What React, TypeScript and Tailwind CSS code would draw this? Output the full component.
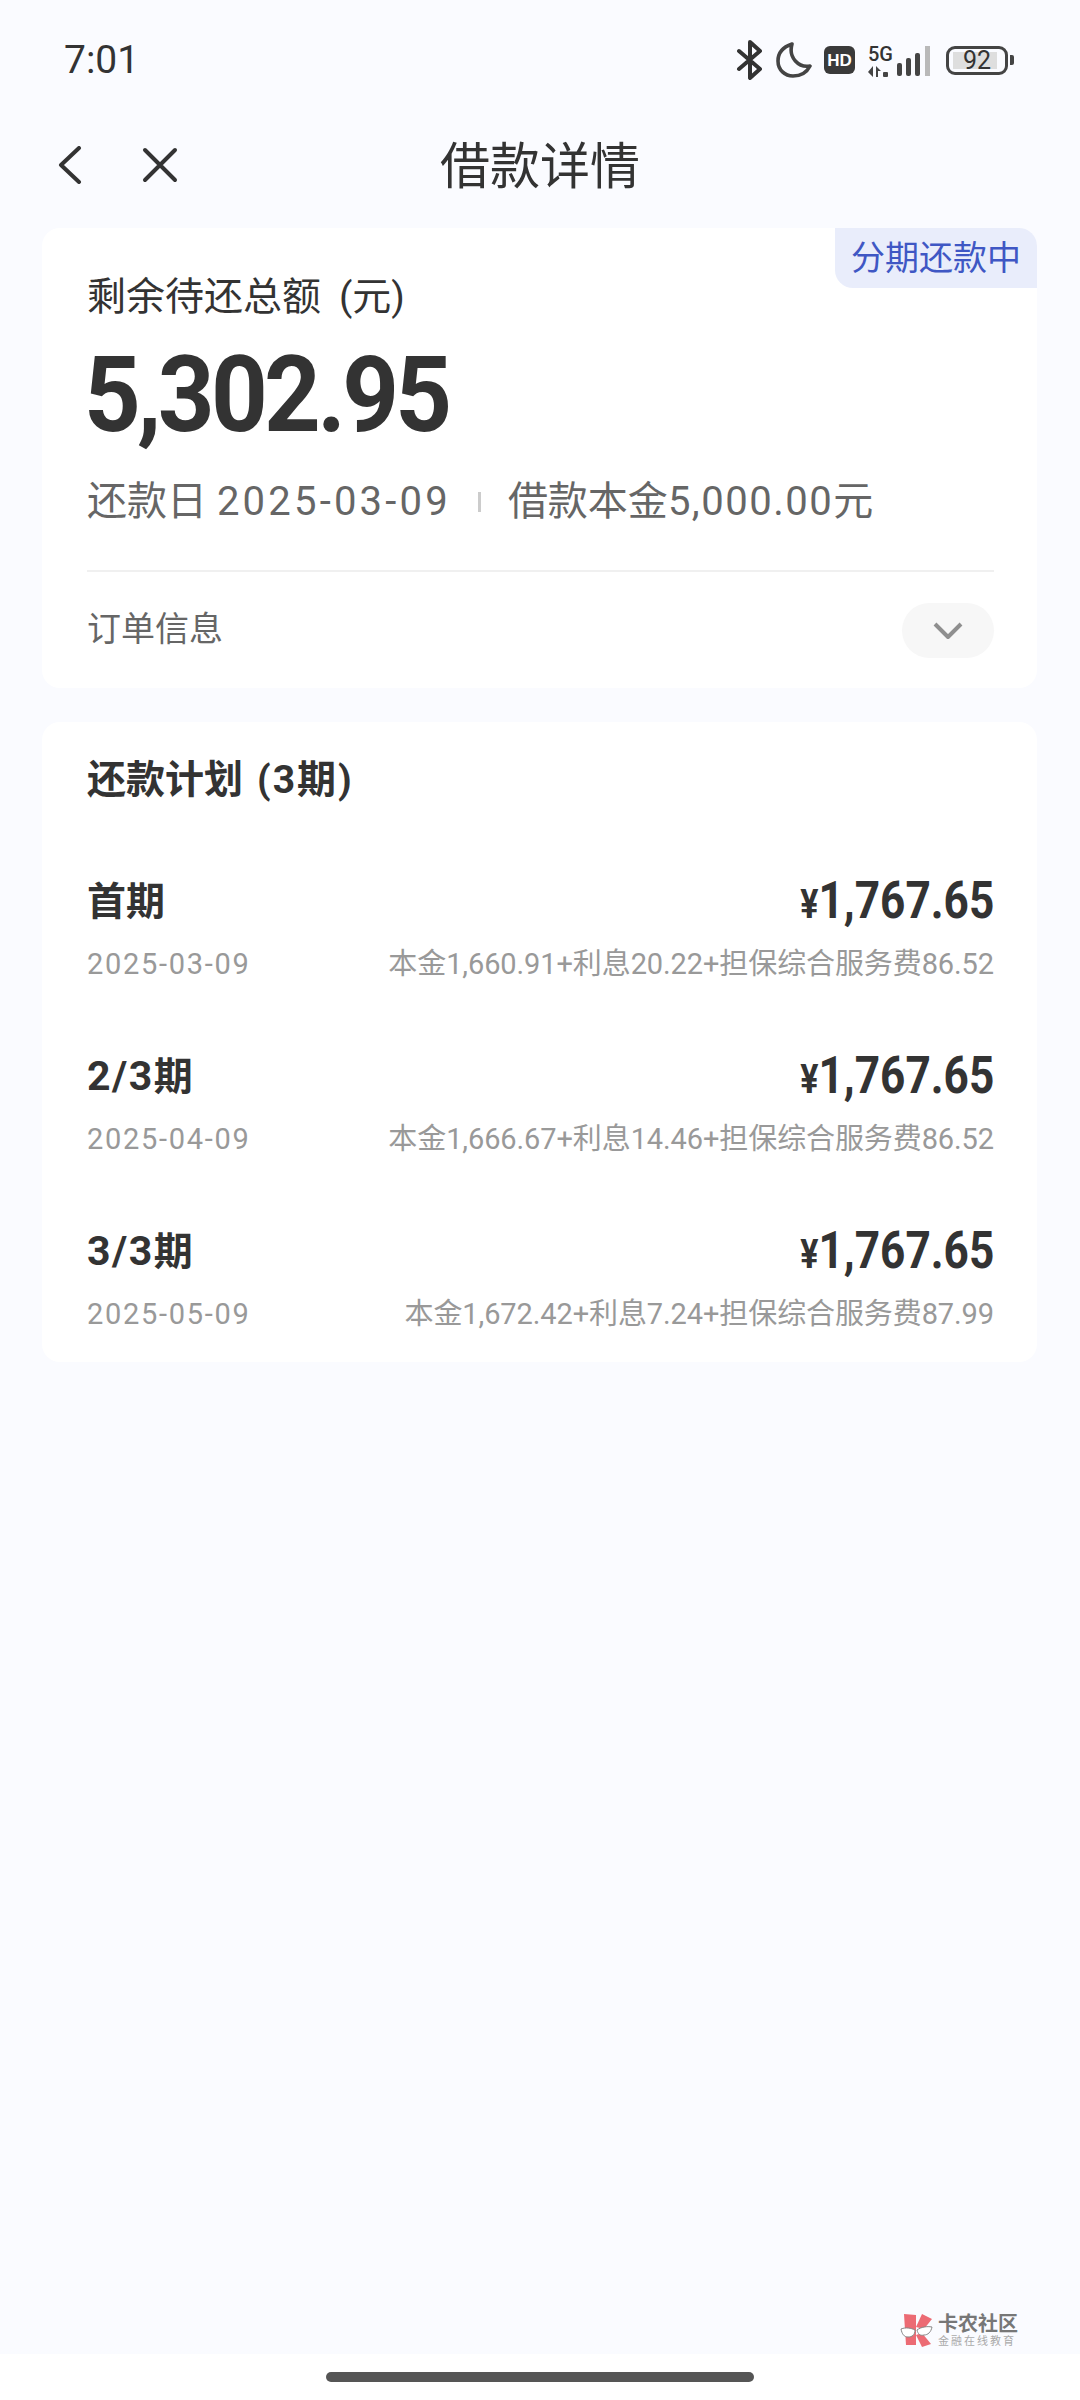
const PLANS = [
  { num: '', name: '首期', date: '2025-03-09', detail: '本金1,660.91+利息20.22+担保综合服务费86.52' },
  { num: '2/3', name: '期', date: '2025-04-09', detail: '本金1,666.67+利息14.46+担保综合服务费86.52' },
  { num: '3/3', name: '期', date: '2025-05-09', detail: '本金1,672.42+利息7.24+担保综合服务费87.99' },
]

function StatusIcons() {
  return (
    <div className="flex items-center text-[#333]">
      {/* bluetooth */}
      <svg className="w-[28px] h-[40px]" viewBox="0 0 28 40" fill="none" stroke="currentColor" strokeWidth="4" strokeLinejoin="round" strokeLinecap="round">
        <path d="M3 11l21 18-10 9V2l10 9L3 29" />
      </svg>
      {/* moon */}
      <svg className="w-[36px] h-[36px] ml-[12px]" viewBox="0 0 36 36" fill="none" stroke="#444" strokeWidth="3.6" strokeLinejoin="round">
        <path d="M16 2C7 5 2 11 2 19c0 9 7 15 15 15 8 0 14-4 17-10-11 2-22-8-18-22z" />
      </svg>
      {/* HD */}
      <div className="w-[31px] h-[28px] ml-[12px] rounded-[6px] bg-[#3a3a3a] flex items-center justify-center text-white text-[17px] leading-none font-bold font-['Liberation_Sans',sans-serif]">
        HD
      </div>
      {/* 5G + signal */}
      <div className="ml-[13px] flex items-end h-[36px]">
        <div className="flex flex-col w-[30px]">
          <span className="text-[20px] leading-[18px] font-medium text-[#333]">5G</span>
          <svg className="w-[20px] h-[12px] mt-[3px]" viewBox="0 0 20 12" fill="#444">
            <path d="M5 0v11L0 6zM8 0l5 5H10v6H8z" />
            <rect x="15" y="6" width="5" height="5" rx="1" />
          </svg>
        </div>
        <svg className="w-[36px] h-[30px] -ml-[1px] mb-[2px]" viewBox="0 0 36 30">
          <rect x="0" y="17" width="5" height="13" rx="2" fill="#444" />
          <rect x="9" y="12" width="5" height="18" rx="2" fill="#444" />
          <rect x="18" y="7" width="5" height="23" rx="2" fill="#444" />
          <rect x="28" y="0" width="5" height="30" fill="#b9b9b9" />
        </svg>
      </div>
      {/* battery */}
      <div className="flex items-center ml-[13px]">
        <div className="relative w-[62px] h-[29px] border-[3px] border-[#444] rounded-[9px] px-[4px] py-[3px]">
          <div className="w-[44px] h-full bg-[#dedede]" />
          <span className="absolute inset-0 flex items-center justify-center text-[25px] leading-none text-[#333]">92</span>
        </div>
        <div className="w-[4px] h-[10px] ml-[2px] rounded-r-[2px] bg-[#444]" />
      </div>
    </div>
  )
}

function Watermark() {
  return (
    <div className="flex items-center justify-end pr-[62px] pb-[2px] h-[46px]">
      <svg className="w-[36px] h-[36px]" viewBox="0 0 36 36">
        <g fill="#ec6b74">
          <path d="M5 2l12 1v30H7z" />
          <path d="M23 2l10 5-8 10-8-2z" />
          <path d="M17 23l6-2 9 11-9 3z" />
        </g>
        <path d="M2 17c5-2 10-1 14 1 0 5-3 7-7 7-4 0-6-3-7-8zM33 15c-5-1-11 0-15 3 1 4 3 6 7 5 4 0 7-3 8-8z" fill="#fff" stroke="#888" strokeWidth="1" />
      </svg>
      <div className="ml-[3px] flex flex-col items-start font-['Noto_Sans_CJK_SC',sans-serif]">
        <span className="text-[20px] leading-[20px] font-bold text-[#777]">卡农社区</span>
        <span className="text-[11px] leading-[14px] tracking-[2px] text-[#aaa]">金融在线教育</span>
      </div>
    </div>
  )
}

export default function App() {
  return (
    <div className="w-[1080px] h-[2400px] flex flex-col bg-[#fafbff] text-[#333] font-['Roboto','Noto_Sans_CJK_SC',sans-serif]">
      {/* status bar */}
      <div className="h-[120px] flex items-center justify-between pl-[64px] pr-[66px]">
        <span className="text-[39px] leading-none">7:01</span>
        <StatusIcons />
      </div>

      {/* nav */}
      <div className="h-[90px] grid grid-cols-[1fr_auto_1fr] items-center">
        <div className="flex items-center gap-[60px] pl-[58px]">
          <svg className="w-[24px] h-[38px]" viewBox="0 0 24 38" fill="none" stroke="#333" strokeWidth="4" strokeLinecap="round" strokeLinejoin="round">
            <path d="M21 2L3 19l18 17" />
          </svg>
          <svg className="w-[36px] h-[36px]" viewBox="0 0 36 36" fill="none" stroke="#333" strokeWidth="4" strokeLinecap="round">
            <path d="M3 3l30 30M33 3L3 33" />
          </svg>
        </div>
        <h1 className="text-[50px] leading-none font-normal pt-[4px]">借款详情</h1>
        <div />
      </div>

      {/* summary card */}
      <div className="relative mt-[18px] ml-[42px] w-[995px] h-[460px] rounded-[18px] bg-white pl-[45px] pr-[43px] pt-[46px]">
        <div className="absolute right-0 top-0 w-[202px] h-[60px] rounded-tr-[18px] rounded-bl-[18px] bg-[#e9edfb] flex items-center justify-center text-[34px] leading-none text-[#3f57c4]">
          分期还款中
        </div>
        <p className="text-[39px] leading-[46px]">
          剩余待还总额<span className="ml-[18px]">(元)</span>
        </p>
        <p className="mt-[15px] -ml-[3px] text-[106px] leading-[120px] font-bold tracking-[-4px] origin-left scale-x-[.935] text-[#333]">5,302.95</p>
        <div className="mt-[22px] flex items-center h-[50px] text-[40px] leading-none text-[#666]">
          <span>
            还款日 <span className="tracking-[3.2px]">2025-03-09</span>
          </span>
          <span className="mx-[27px] w-[3px] h-[20px] bg-[#ccc]" />
          <span>
            借款本金<span className="tracking-[1.5px]">5,000.00</span>元
          </span>
        </div>
        <div className="mt-[43px] h-[2px] bg-[#f0f0f0]" />
        <div className="mt-[31px] flex items-center justify-between">
          <span className="pb-[3px] text-[34px] leading-none text-[#666]">订单信息</span>
          <div className="w-[92px] h-[55px] rounded-full bg-[#f7f7f7] flex items-center justify-center">
            <svg className="w-[30px] h-[18px]" viewBox="0 0 30 18" fill="none" stroke="#8f8f8f" strokeWidth="4" strokeLinejoin="round">
              <path d="M2 2l13 13L28 2" />
            </svg>
          </div>
        </div>
      </div>

      {/* repayment plan */}
      <div className="mt-[34px] ml-[42px] w-[995px] h-[640px] rounded-[18px] bg-white pl-[45px] pr-[43px] pt-[35px]">
        <h2 className="text-[39px] leading-[46px] font-bold">
          还款计划<span className="ml-[14px] tracking-[2px]">(3期)</span>
        </h2>
        <div className="mt-[70px] flex flex-col gap-[59px]">
          {PLANS.map((plan) => (
            <div key={plan.date}>
              <div className="flex items-center justify-between h-[56px]">
                <span className="text-[39px] leading-none font-bold">
                  <span className="text-[41px] tracking-[1.5px]">{plan.num}</span>
                  {plan.name}
                </span>
                <span className="flex items-baseline origin-right scale-x-[.85] text-[52px] leading-none font-bold">
                  <span className="text-[40px]">¥</span>1,767.65
                </span>
              </div>
              <div className="mt-[10px] flex items-center justify-between h-[50px] text-[29px] leading-none text-[#999]">
                <span className="tracking-[1.7px]">{plan.date}</span>
                <span className="tracking-[-0.1px]">{plan.detail}</span>
              </div>
            </div>
          ))}
        </div>
      </div>

      <div className="mt-auto">
        <Watermark />
        <div className="h-[46px] bg-white flex items-center justify-center">
          <div className="w-[428px] h-[10px] rounded-full bg-[#555]" />
        </div>
      </div>
    </div>
  )
}
